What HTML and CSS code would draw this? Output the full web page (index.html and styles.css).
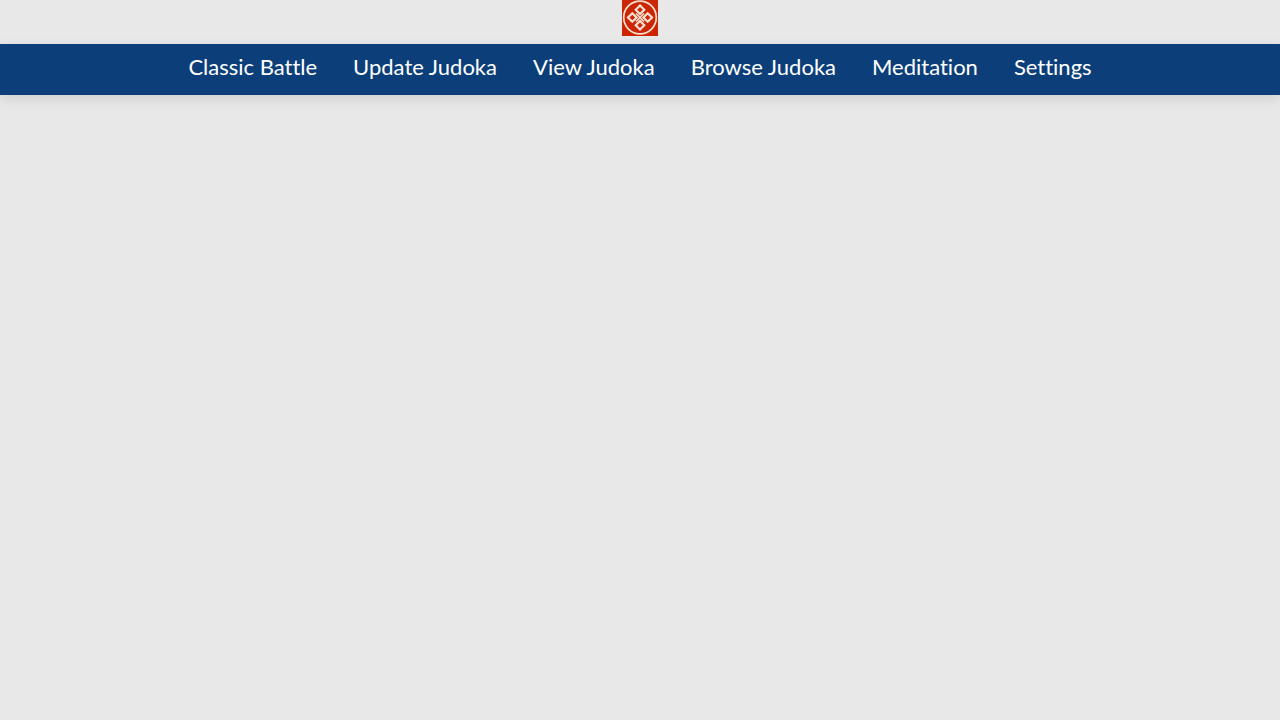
FILE: index.html
```html
<!DOCTYPE html>
<html lang="en">
<head>
<meta charset="utf-8">
<meta name="viewport" content="width=device-width, initial-scale=1">
<title>Judoka</title>
<link rel="stylesheet" href="styles.css">
</head>
<body>
<header class="header">
  <a class="logo-link" href="#" aria-label="Home">
    <svg class="logo" viewBox="0 0 36 36" aria-hidden="true">
      <rect width="36" height="36" fill="#cb2504"/>
      <g fill="none" stroke="#fbdfcf">
        <circle cx="18" cy="17.500" r="16.300" stroke-width="1.700"/>
        <g stroke-width="2.200">
          <path d="m18 5.500 4.300 4.300-4.300 4.300-4.300-4.300z"/>
          <path d="m25.700 13.200 4.300 4.300-4.300 4.300-4.300-4.300z"/>
          <path d="m18 20.900 4.300 4.300-4.300 4.300-4.300-4.300z"/>
          <path d="m10.300 13.200 4.300 4.300-4.300 4.300-4.300-4.300z"/>
        </g>
        <path stroke-width="1.600" d="m14 13.500 8 8M22 13.500l-8 8"/>
      </g>
    </svg>
  </a>
</header>
<nav class="navbar" aria-label="Main">
  <ul class="nav-list">
    <li><a href="#">Classic Battle</a></li>
    <li><a href="#">Update Judoka</a></li>
    <li><a href="#">View Judoka</a></li>
    <li><a href="#">Browse Judoka</a></li>
    <li><a href="#">Meditation</a></li>
    <li><a href="#">Settings</a></li>
  </ul>
</nav>
</body>
</html>
```
FILE: styles.css
```css
body {
  margin: 0;
  min-height: 100vh;
  background: #e8e8e8;
  font-family: Lato, "Liberation Sans", sans-serif;
}

.header {
  display: flex;
  justify-content: center;
  padding-bottom: 8px;
}

.logo-link,
.logo {
  display: block;
}

.logo {
  width: 36px;
  height: 36px;
}

.navbar {
  background: #0c3f7a;
  box-shadow: 0 4px 12px rgba(0, 0, 0, 0.1);
}

.nav-list {
  display: flex;
  justify-content: center;
  gap: 36px;
  margin: 0;
  padding: 9px 0 14px;
  list-style: none;
  font-size: 22px;
  line-height: 28px;
  font-variant-ligatures: none;
}

.nav-list a {
  color: #fff;
  text-decoration: none;
  white-space: nowrap;
}
```
